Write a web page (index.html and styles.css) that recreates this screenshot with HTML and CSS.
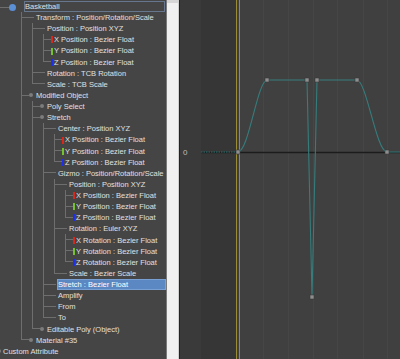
FILE: index.html
```html
<!DOCTYPE html>
<html>
<head>
<meta charset="utf-8">
<link rel="stylesheet" href="styles.css">
</head>
<body>
<div class="app">
  <div class="outline">
    <div class="tree">
      <div class="root-row"><span class="root-dot"></span><span class="label boxed">Basketball</span></div>
      <ul class="lvl1">
        <li><div class="row plain"><span class="label">Transform : Position/Rotation/Scale</span></div>
          <ul>
            <li><div class="row plain"><span class="label">Position : Position XYZ</span></div>
              <ul>
                <li><div class="row bar bx"><span class="label">X Position : Bezier Float</span></div></li>
                <li><div class="row bar by"><span class="label">Y Position : Bezier Float</span></div></li>
                <li><div class="row bar bz"><span class="label">Z Position : Bezier Float</span></div></li>
              </ul>
            </li>
            <li><div class="row plain"><span class="label">Rotation : TCB Rotation</span></div></li>
            <li><div class="row plain"><span class="label">Scale : TCB Scale</span></div></li>
          </ul>
        </li>
        <li><div class="row dot"><span class="label">Modified Object</span></div>
          <ul>
            <li><div class="row dot"><span class="label">Poly Select</span></div></li>
            <li><div class="row dot"><span class="label">Stretch</span></div>
              <ul>
                <li><div class="row plain"><span class="label">Center : Position XYZ</span></div>
                  <ul>
                    <li><div class="row bar bx"><span class="label">X Position : Bezier Float</span></div></li>
                    <li><div class="row bar by"><span class="label">Y Position : Bezier Float</span></div></li>
                    <li><div class="row bar bz"><span class="label">Z Position : Bezier Float</span></div></li>
                  </ul>
                </li>
                <li><div class="row plain"><span class="label">Gizmo : Position/Rotation/Scale</span></div>
                  <ul>
                    <li><div class="row plain"><span class="label">Position : Position XYZ</span></div>
                      <ul>
                        <li><div class="row bar bx"><span class="label">X Position : Bezier Float</span></div></li>
                        <li><div class="row bar by"><span class="label">Y Position : Bezier Float</span></div></li>
                        <li><div class="row bar bz"><span class="label">Z Position : Bezier Float</span></div></li>
                      </ul>
                    </li>
                    <li><div class="row plain"><span class="label">Rotation : Euler XYZ</span></div>
                      <ul>
                        <li><div class="row bar bx"><span class="label">X Rotation : Bezier Float</span></div></li>
                        <li><div class="row bar by"><span class="label">Y Rotation : Bezier Float</span></div></li>
                        <li><div class="row bar bz"><span class="label">Z Rotation : Bezier Float</span></div></li>
                      </ul>
                    </li>
                    <li><div class="row plain"><span class="label">Scale : Bezier Scale</span></div></li>
                  </ul>
                </li>
                <li><div class="row plain selected"><span class="label">Stretch : Bezier Float</span></div></li>
                <li><div class="row plain"><span class="label">Amplify</span></div></li>
                <li><div class="row plain"><span class="label">From</span></div></li>
                <li><div class="row plain"><span class="label">To</span></div></li>
              </ul>
            </li>
            <li><div class="row dot"><span class="label">Editable Poly (Object)</span></div></li>
          </ul>
        </li>
        <li><div class="row dot"><span class="label">Material #35</span></div></li>
      </ul>
      <div class="custom-row"><span class="label">Custom Attribute</span></div>
    </div>
  </div>
  <div class="scrollbar"><div class="thumb"></div></div>
  <div class="graph">
    <svg class="curve-canvas" width="221" height="359" viewBox="0 0 221 359">
      <rect x="0" y="0" width="1" height="359" fill="#222"/>
      <rect x="1" y="0" width="21" height="359" fill="#3a3a3a"/>
      <rect x="22" y="0" width="35" height="359" fill="#363636"/>
      <rect x="57" y="0" width="164" height="359" fill="#404040"/>
      <g stroke="#464646" stroke-width="1">
        <line x1="84.5" y1="0" x2="84.5" y2="359"/>
        <line x1="109.5" y1="0" x2="109.5" y2="359"/>
        <line x1="134.5" y1="0" x2="134.5" y2="359"/>
        <line x1="158.5" y1="0" x2="158.5" y2="359"/>
        <line x1="184.5" y1="0" x2="184.5" y2="359"/>
        <line x1="208.5" y1="0" x2="208.5" y2="359"/>
      </g>
      <line x1="57.5" y1="0" x2="57.5" y2="359" stroke="#9a8c34" stroke-width="1"/>
      <line x1="60.5" y1="0" x2="60.5" y2="359" stroke="#9a8c34" stroke-width="1"/>
      <line x1="22" y1="152.5" x2="221" y2="152.5" stroke="#1c1c1c" stroke-width="1.5"/>
      <line x1="22" y1="152" x2="59" y2="152" stroke="#2f7474" stroke-width="1" stroke-dasharray="1.5 1"/>
      <path d="M59,152 C70,151 78,82 88,80 L128,80 L133,297 L138,80 L178,80 C188,82 197,151 208,152 L221,152" fill="none" stroke="#367c7c" stroke-width="1.1"/>
      <g fill="#8e8e8e" stroke="#3a3a3a" stroke-width="0.6">
        <rect x="57" y="150" width="4" height="4"/>
        <rect x="86" y="78" width="4" height="4"/>
        <rect x="126" y="78" width="4" height="4"/>
        <rect x="136" y="78" width="4" height="4"/>
        <rect x="176" y="78" width="4" height="4"/>
        <rect x="206" y="150" width="4" height="4"/>
        <rect x="131" y="295" width="4" height="4"/>
      </g>
      <text class="zero" x="4" y="155">0</text>
    </svg>
  </div>
</div>
</body>
</html>
```

FILE: styles.css
```css
* { box-sizing: border-box; }
html, body { margin: 0; padding: 0; }
body {
  width: 400px;
  height: 359px;
  overflow: hidden;
  background: #444;
  font-family: "Liberation Sans", Arial, sans-serif;
}
.app { display: flex; height: 359px; }

.outline {
  width: 166px;
  flex: none;
  background: #454545;
  overflow: hidden;
  padding-top: 0.5px;
}
.tree {
  font-size: 7.5px;
  color: #e0e0e0;
}
.tree ul { list-style: none; margin: 0 0 0 11px; padding: 0; }
.tree ul.lvl1 { margin-left: 21px; }
.tree li { position: relative; }
.tree li::before {
  content: "";
  position: absolute;
  left: 0;
  top: 0;
  bottom: 0;
  border-left: 1px solid #6e6e6e;
}
.tree li:last-child::before { bottom: auto; height: 6px; }

.row, .root-row, .custom-row {
  position: relative;
  height: 11.13px;
  display: flex;
  white-space: nowrap;
  line-height: 9.73px;
  padding-top: 1.4px;
}
.row { padding-left: 15px; }
.row::before {
  content: "";
  position: absolute;
  left: 0;
  top: 5px;
  width: 13px;
  border-top: 1px solid #6e6e6e;
}
.row.bar { padding-left: 11px; }
.row.bar::before, .row.dot::before { width: 8px; }
.row.bar::after {
  content: "";
  position: absolute;
  left: 8px;
  top: 2.5px;
  width: 2px;
  height: 7px;
}
.row.bx::after { background: #d8281c; }
.row.by::after { background: #74c22e; }
.row.bz::after { background: #1f2ee8; }
.row.dot::after {
  content: "";
  position: absolute;
  left: 8px;
  top: 3.5px;
  width: 4px;
  height: 4px;
  border-radius: 50%;
  background: #7c7c7c;
}

.row.selected { padding-top: 0; line-height: 9.13px; }
.row.selected .label {
  flex: 1;
  margin-left: -1px;
  background: #5b87c3;
  border: 1px solid #79a0d4;
  color: #fff;
  padding-top: 0.4px;
}

.root-row { padding-left: 24px; padding-top: 0; line-height: 9.13px; }
.root-row::before {
  content: "";
  position: absolute;
  left: 0;
  top: 6px;
  width: 9px;
  border-top: 1px solid #6e6e6e;
}
.root-dot {
  position: absolute;
  left: 9px;
  top: 3px;
  width: 7px;
  height: 7px;
  border-radius: 50%;
  background: #5b8fd6;
}
.label.boxed {
  flex: 1;
  margin-right: 1px;
  border: 1px solid #66768c;
  padding-top: 0.4px;
}

.custom-row { padding-left: 3px; }
.custom-row::before {
  content: "";
  position: absolute;
  left: -3px;
  top: 3.5px;
  width: 4px;
  height: 4px;
  border-radius: 50%;
  background: #7c7c7c;
}

.scrollbar {
  width: 13px;
  flex: none;
  background: #f0f0f0;
  border-left: 1px solid #7a7a7a;
  border-right: 1px solid #cfcfcf;
}
.thumb { height: 3px; background: #d6d6d6; }

.graph { flex: 1; display: flex; }
.curve-canvas { display: block; }
.zero {
  font-family: "Liberation Sans", Arial, sans-serif;
  font-size: 8px;
  fill: #bcbcbc;
}
```
